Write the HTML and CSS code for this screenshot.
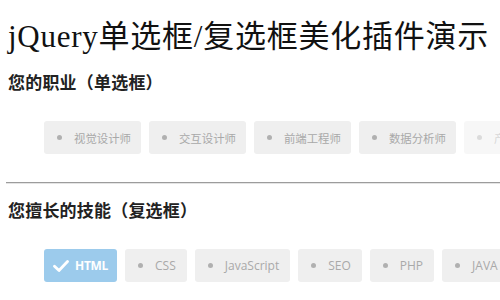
FILE: index.html
```html
<!DOCTYPE html>
<html lang="zh-CN">
<head>
<meta charset="utf-8">
<title>jQuery单选框/复选框美化插件演示</title>
<link rel="stylesheet" href="styles.css">
</head>
<body>
<h1 class="title">jQuery单选框/复选框美化插件演示</h1>

<h3 class="group-title">您的职业（单选框）</h3>
<div class="options">
  <label class="opt"><span class="dot"></span>视觉设计师</label>
  <label class="opt"><span class="dot"></span>交互设计师</label>
  <label class="opt"><span class="dot"></span>前端工程师</label>
  <label class="opt"><span class="dot"></span>数据分析师</label>
  <label class="opt disabled"><span class="dot"></span>产品经理</label>
</div>

<hr class="sep">

<h3 class="group-title">您擅长的技能（复选框）</h3>
<div class="options">
  <label class="opt checked"><svg class="check" viewBox="0 0 16 12" width="16" height="12"><path d="M1.5 6.2 L6 10.5 L14.5 1.5" fill="none" stroke="#fff" stroke-width="2.8" stroke-linecap="round" stroke-linejoin="round"/></svg>HTML</label>
  <label class="opt latin"><span class="dot"></span>CSS</label>
  <label class="opt latin"><span class="dot"></span>JavaScript</label>
  <label class="opt latin"><span class="dot"></span>SEO</label>
  <label class="opt latin"><span class="dot"></span>PHP</label>
  <label class="opt latin"><span class="dot"></span>JAVA</label>
</div>
</body>
</html>
```
FILE: styles.css
```css
html, body {
  margin: 0;
  padding: 0;
  background: #fff;
  overflow: hidden;
}
body {
  padding: 0 8px;
  width: 484px;
  font-family: "Noto Sans CJK SC", sans-serif;
  color: #111;
}
.title {
  margin: 17px 0 0 0;
  font-family: "Liberation Serif", "Noto Sans CJK SC", serif;
  font-weight: 400;
  font-size: 31px;
  line-height: 40px;
  white-space: nowrap;
  color: #111;
  letter-spacing: 0.75px;
}
.group-title {
  margin: 13px 0 0 0;
  font-size: 17px;
  line-height: 24px;
  font-weight: 700;
  color: #222;
  white-space: nowrap;
  letter-spacing: 0.2px;
}
.options {
  display: flex;
  gap: 8px;
  margin: 27px 0 0 36px;
  white-space: nowrap;
}
.opt {
  flex-shrink: 0;
  display: flex;
  align-items: center;
  height: 33px;
  padding: 0 10px 0 13px;
  background: #efefef;
  border-radius: 3px;
  color: #a9a9a9;
  font-family: "Open Sans", "Noto Sans CJK SC", sans-serif;
  font-size: 11.4px;
  box-sizing: border-box;
}
.latin {
  font-size: 12px;
  padding-right: 11px;
}
.dot {
  width: 5px;
  height: 5px;
  border-radius: 50%;
  background: #b0b0b0;
  margin-right: 12px;
  flex-shrink: 0;
}
.disabled {
  opacity: 0.45;
}
.checked {
  background: #9ccbec;
  color: #fff;
  font-weight: 700;
  font-size: 12px;
  padding: 0 9px 0 9px;
  letter-spacing: -0.3px;
}
.check {
  margin-right: 6px;
  flex-shrink: 0;
}
.sep {
  margin: 28px -10px 0 -2px;
  height: 0;
  border: 0;
  border-top: 1px solid #9c9c9c;
  border-bottom: 1px solid #e4e4e4;
}
.sep + .group-title {
  margin-top: 14px;
}
```
